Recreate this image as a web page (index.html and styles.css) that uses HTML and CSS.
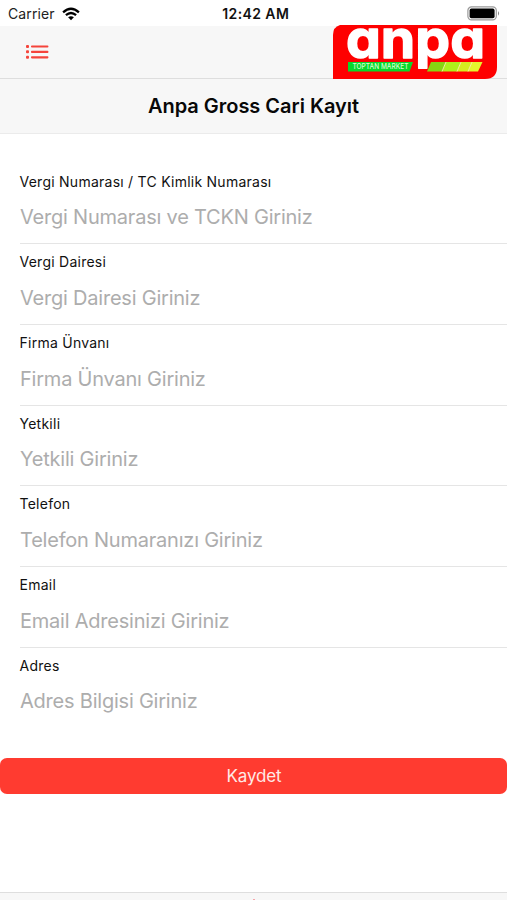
FILE: index.html
```html
<!DOCTYPE html>
<html lang="tr">
<head>
<meta charset="utf-8">
<meta name="viewport" content="width=device-width, initial-scale=1">
<title>Anpa Gross Cari Kayıt</title>
<link rel="stylesheet" href="styles.css">
</head>
<body>
<div class="screen">
  <header class="status">
    <div class="carrier"><span>Carrier</span>
      <svg class="wifi" width="18" height="14" viewBox="0 0 18 14">
        <g fill="none" stroke="#000" stroke-width="2.3"><path d="M1.1 5.3Q9-1.7 16.9 5.3"/><path d="M3.9 8.2Q9 3.8 14.1 8.2"/></g>
        <path d="M9 13.2 6.1 10.2Q9 8.1 11.9 10.2Z"/>
      </svg>
    </div>
    <span class="clock">12:42 AM</span>
    <svg class="battery" width="34" height="15" viewBox="0 0 34 15">
      <rect x=".9" y=".9" width="28.4" height="13" rx="3.6" fill="#fff" stroke="#999" stroke-width="1.2"/>
      <rect x="2.6" y="2.6" width="25" height="9.6" rx="1.8"/>
      <path d="M31 5.1Q33.2 7.4 31 9.7Z" fill="#888"/>
    </svg>
  </header>
  <nav class="navbar">
    <svg class="menu" width="24" height="16" viewBox="0 0 24 16">
      <g fill="#f5443b"><rect x="1" y="1" width="3" height="3" rx="1"/><rect x="1" y="6.3" width="3" height="3" rx="1"/><rect x="1" y="11.7" width="3" height="3" rx="1"/>
      <rect x="6" y="1.4" width="17.4" height="2.2" rx=".8"/><rect x="6" y="6.8" width="17.4" height="2.2" rx=".8"/><rect x="6" y="12.2" width="17.4" height="2.2" rx=".8"/></g>
    </svg>
    <svg class="logo" width="164" height="54" viewBox="0 0 164 54">
      <path fill="#fe0000" d="M7 0H164V42Q164 54 152 54H0V10Q0 2 7 0Z"/>
      <text class="brand" x="13" y="32.800" textLength="139" lengthAdjust="spacingAndGlyphs">anpa</text>
      <path fill="#08d82b" d="M15 37H80L76.500 46.500H15Z"/>
      <text class="tagline" x="19.500" y="44.300" textLength="56" lengthAdjust="spacingAndGlyphs">TOPTAN MARKET</text>
      <path fill="#87d512" d="M98 37H113L109 46.500H94Z"/>
      <path fill="#aef01b" d="M113 37H128L124 46.500H109Z"/>
      <path fill="#d6ed20" d="M128 37H139L135 46.500H124Z"/>
      <path fill="#e5f62d" d="M139 37H149.500L145 46.500H135Z"/>
      <path fill="none" stroke="#f7ffc0" stroke-width=".8" d="M113 37l-4 9.500M128 37l-4 9.500M139 37l-4 9.500"/>
    </svg>
  </nav>
  <div class="titlebar"><h1>Anpa Gross Cari Kayıt</h1></div>
  <main>
    <div class="field"><label for="f1">Vergi Numarası / TC Kimlik Numarası</label><input id="f1" placeholder="Vergi Numarası ve TCKN Giriniz"></div>
    <div class="field"><label for="f2">Vergi Dairesi</label><input id="f2" placeholder="Vergi Dairesi Giriniz"></div>
    <div class="field"><label for="f3">Firma Ünvanı</label><input id="f3" placeholder="Firma Ünvanı Giriniz"></div>
    <div class="field"><label for="f4">Yetkili</label><input id="f4" placeholder="Yetkili Giriniz"></div>
    <div class="field"><label for="f5">Telefon</label><input id="f5" placeholder="Telefon Numaranızı Giriniz"></div>
    <div class="field"><label for="f6">Email</label><input id="f6" placeholder="Email Adresinizi Giriniz"></div>
    <div class="field"><label for="f7">Adres</label><input id="f7" placeholder="Adres Bilgisi Giriniz"></div>
    <button class="save" type="button">Kaydet</button>
  </main>
  <footer class="tabbar"><i class="tab-tip"></i></footer>
</div>
</body>
</html>
```
FILE: styles.css
```css
* { box-sizing: border-box; }
body { margin: 0; background: #fff; color: #111; font-family: Inter, "Liberation Sans", sans-serif; }
.screen { display: flex; flex-direction: column; height: 900px; overflow: hidden; }
.status { display: grid; grid-template-columns: 1fr auto 1fr; align-items: center; height: 26px; padding: 1px 6px 0 8px; }
.carrier { display: flex; align-items: center; gap: 7px; font-size: 14px; letter-spacing: 0.1px; color: #222; }
.clock { padding-left: 2.5px; font-size: 14px; font-weight: 600; letter-spacing: 0.4px; color: #111; }
.battery { justify-self: end; }
.navbar { display: flex; justify-content: space-between; align-items: flex-start; height: 53px; padding: 0 10px 0 25px; background: #f7f7f7; border-bottom: 1px solid #dedede; }
.menu { margin-top: 18px; }
.logo { margin-top: -1px; flex: none; }
.brand { font-size: 53px; font-weight: 700; fill: #fff; stroke: #fff; stroke-width: 1.4px; stroke-linejoin: round; font-feature-settings: "cv11"; }
.tagline { font-size: 7px; font-weight: 500; fill: #d5ffd0; }
.titlebar { height: 55px; display: flex; align-items: center; justify-content: center; background: #f7f7f7; border-bottom: 1px solid #ebebeb; }
h1 { margin: 0; font-size: 20px; line-height: 26px; font-weight: 600; letter-spacing: -0.02px; color: #080808; }
main { padding-top: 29.6px; flex: 1; }
.field { display: flex; flex-direction: column; height: 80.67px; margin-left: 20px; padding-top: 9.1px; border-bottom: 1px solid #e5e5e5; }
.field:nth-child(7) { border-bottom-color: transparent; }
label { margin-left: -0.5px; font-size: 14px; line-height: 18px; letter-spacing: 0.25px; }
input { width: 100%; height: 30px; margin-top: 11.7px; padding: 0; border: 0; outline: 0; background: transparent; font: 20px/30px Inter, "Liberation Sans", sans-serif; letter-spacing: -0.22px; }
input::placeholder { color: #adadad; opacity: 1; }
.save { display: block; width: 100%; height: 36px; margin-top: 29.6px; padding: 0 0 0 1px; border: 0; border-radius: 7px; background: #ff3b30; color: #ffe9e6; font: 17px/36px Inter, "Liberation Sans", sans-serif; letter-spacing: -0.15px; }
.tabbar { height: 8px; flex: none; display: flex; align-items: flex-end; justify-content: center; background: #f7f7f7; border-top: 1px solid #dedede; }
.tab-tip { width: 2px; height: 1px; background: #f5a5aa; }
```
